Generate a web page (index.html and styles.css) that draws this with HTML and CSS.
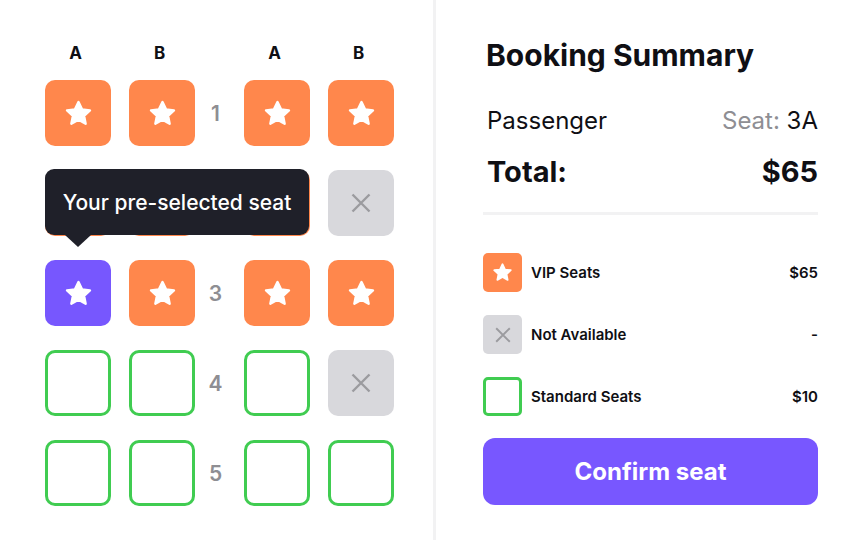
FILE: index.html
```html
<!DOCTYPE html>
<html>
<head>
<meta charset="utf-8">
<link rel="stylesheet" href="styles.css">
</head>
<body>
<svg width="0" height="0" style="position:absolute">
  <defs>
    <symbol id="star" viewBox="0 0 24 24">
      <polygon points="12,2.5 14.9,8.6 21.5,9.4 16.6,13.9 17.9,20.5 12,17.2 6.1,20.5 7.4,13.9 2.5,9.4 9.1,8.6" fill="#fff" stroke="#fff" stroke-width="2" stroke-linejoin="round"/>
    </symbol>
    <symbol id="cross" viewBox="0 0 20 20">
      <path d="M1.5 1.5 L18.5 18.5 M18.5 1.5 L1.5 18.5" stroke="#9b9b9f" stroke-width="2.4" fill="none"/>
    </symbol>
  </defs>
</svg>
<div class="app">
  <section class="map">
    <div class="grid head">
      <span class="col">A</span><span class="col">B</span><span></span><span class="col">A</span><span class="col">B</span>
    </div>
    <div class="seats-wrap">
      <div class="grid seats">
        <div class="seat vip"><svg class="star"><use href="#star"/></svg></div>
        <div class="seat vip"><svg class="star"><use href="#star"/></svg></div>
        <div class="num">1</div>
        <div class="seat vip"><svg class="star"><use href="#star"/></svg></div>
        <div class="seat vip"><svg class="star"><use href="#star"/></svg></div>

        <div class="seat vip"></div>
        <div class="seat vip"></div>
        <div class="num hidden">2</div>
        <div class="seat vip"></div>
        <div class="seat na"><svg class="cross"><use href="#cross"/></svg></div>

        <div class="seat sel"><svg class="star"><use href="#star"/></svg></div>
        <div class="seat vip"><svg class="star"><use href="#star"/></svg></div>
        <div class="num">3</div>
        <div class="seat vip"><svg class="star"><use href="#star"/></svg></div>
        <div class="seat vip"><svg class="star"><use href="#star"/></svg></div>

        <div class="seat std"></div>
        <div class="seat std"></div>
        <div class="num">4</div>
        <div class="seat std"></div>
        <div class="seat na"><svg class="cross"><use href="#cross"/></svg></div>

        <div class="seat std"></div>
        <div class="seat std"></div>
        <div class="num">5</div>
        <div class="seat std"></div>
        <div class="seat std"></div>
      </div>
      <div class="tooltip">Your pre-selected seat</div>
    </div>
  </section>
  <section class="summary">
    <h1 class="title">Booking Summary</h1>
    <div class="row passenger">
      <span>Passenger</span>
      <span><span class="muted">Seat:</span> 3A</span>
    </div>
    <div class="row total">
      <span>Total:</span>
      <span>$65</span>
    </div>
    <div class="divider"></div>
    <ul class="legend">
      <li class="item">
        <span class="box vip"><svg class="lstar"><use href="#star"/></svg></span>
        <span class="label">VIP Seats</span>
        <span class="price">$65</span>
      </li>
      <li class="item">
        <span class="box na"><svg class="lcross"><use href="#cross"/></svg></span>
        <span class="label">Not Available</span>
        <span class="price">-</span>
      </li>
      <li class="item">
        <span class="box std"></span>
        <span class="label">Standard Seats</span>
        <span class="price">$10</span>
      </li>
    </ul>
    <button class="confirm">Confirm seat</button>
  </section>
</div>
</body>
</html>
```
FILE: styles.css
```css
* { box-sizing: border-box; }
html, body { margin: 0; padding: 0; background: #fff; }
body {
  font-family: Inter, "Noto Sans", sans-serif;
  color: #0f0f14;
  width: 864px;
  height: 540px;
  overflow: hidden;
}
.app {
  display: flex;
  height: 540px;
}
.map {
  width: 436px;
  border-right: 3px solid #f2f2f3;
  padding: 43px 0 0 45px;
}
.grid {
  display: grid;
  grid-template-columns: 66px 66px 13px 66px 66px;
  column-gap: 18px;
}
.head {
  height: 20px;
  margin-bottom: 17px;
}
.col {
  text-align: center;
  font-weight: 700;
  font-size: 17px;
  line-height: 20px;
  padding-right: 5px;
}
.seats-wrap { position: relative; }
.seats { row-gap: 24px; }
.seat {
  width: 66px;
  height: 66px;
  border-radius: 10px;
  display: flex;
  align-items: center;
  justify-content: center;
}
.seat.vip { background: #ff874c; }
.seat.sel { background: #7757fe; }
.seat.na { background: #d8d8dc; }
.seat.std { border: 3px solid #40cc51; }
.star { width: 29px; height: 29px; }
.cross { width: 20px; height: 20px; }
.num {
  display: flex;
  align-items: center;
  justify-content: center;
  margin-left: -8px;
  font-size: 21px;
  font-weight: 600;
  color: #8e8e93;
}
.num.hidden { visibility: hidden; }
.tooltip {
  position: absolute;
  top: 89px;
  left: 0;
  width: 264px;
  height: 66px;
  background: #1f2029;
  color: #fff;
  border-radius: 9px;
  font-size: 21px;
  font-weight: 500;
  display: flex;
  align-items: center;
  justify-content: center;
}
.tooltip::after {
  content: "";
  position: absolute;
  left: 20px;
  top: 66px;
  border-left: 13px solid transparent;
  border-right: 13px solid transparent;
  border-top: 12px solid #1f2029;
}
.summary {
  flex: 1;
  padding: 36px 46px 0 47px;
  display: flex;
  flex-direction: column;
}
.title {
  margin: 0;
  font-size: 30px;
  font-weight: 700;
  line-height: 38px;
  padding-left: 3px;
}
.row {
  display: flex;
  justify-content: space-between;
  padding-left: 4px;
}
.passenger {
  margin-top: 32px;
  font-size: 24px;
  line-height: 30px;
}
.muted { color: #8e8e93; }
.total {
  margin-top: 18px;
  font-size: 29px;
  font-weight: 700;
  line-height: 36px;
}
.divider {
  height: 3px;
  background: #f2f2f3;
  margin-top: 22px;
}
.legend {
  list-style: none;
  margin: 38px 0 0;
  padding: 0;
  display: flex;
  flex-direction: column;
  gap: 23px;
}
.item {
  display: flex;
  align-items: center;
  height: 39px;
  font-size: 15px;
  font-weight: 600;
}
.box {
  width: 39px;
  height: 39px;
  border-radius: 5px;
  display: flex;
  align-items: center;
  justify-content: center;
  margin-right: 9px;
}
.box.vip { background: #ff874c; }
.box.na { background: #d8d8dc; }
.box.std { border: 3px solid #40cc51; }
.lstar { width: 21px; height: 21px; }
.lcross { width: 16px; height: 16px; }
.label { flex: 1; }
.confirm {
  margin-top: 22px;
  height: 67px;
  border: none;
  border-radius: 12px;
  background: #7857ff;
  color: #fff;
  font-family: Inter, "Noto Sans", sans-serif;
  font-size: 24px;
  font-weight: 700;
  width: 100%;
}
```
